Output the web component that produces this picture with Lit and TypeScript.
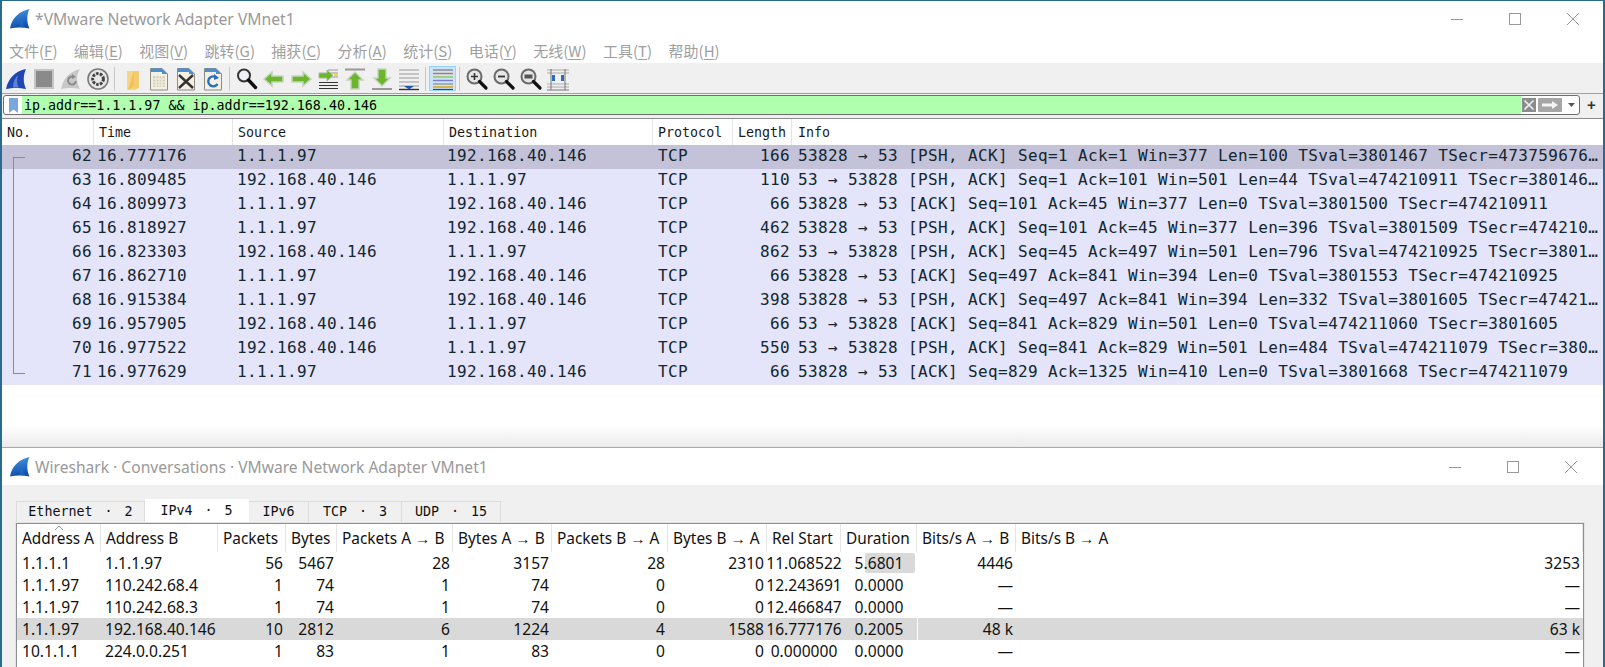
import { LitElement, html, css, svg } from "lit";
import { customElement } from "lit/decorators.js";

const fin = (id: string) => html`<svg class="fin" viewBox="0 0 20 20">
  <defs><linearGradient id=${id} x1="0" y1="0" x2="0.2" y2="1"><stop offset="0" stop-color="#4a9be0"/><stop offset="1" stop-color="#0f4fb0"/></linearGradient></defs>
  <path d="M0 19.5C1.5 10 8 2.5 19.5 0C16.5 6 16.5 13 19.5 19.5C13 18.2 6 18.2 0 19.5Z" fill="url(#${id})"/>
  <path d="M13.5 7C12 11 12.5 15 15 18.2C13.5 18 11.5 17.8 10 17.7C10 13 11 9.5 13.5 7Z" fill="#2a6fc8" opacity=".5"/>
</svg>`;

const winCtl = () => html`<div class="ctl">
  <svg viewBox="0 0 58 14" width="58" height="14"><path d="M23 7.5H35" stroke="#999" fill="none"/></svg>
  <svg viewBox="0 0 58 14" width="58" height="14"><rect x="23.5" y="1.5" width="11" height="11" stroke="#999" fill="none"/></svg>
  <svg viewBox="0 0 58 14" width="58" height="14"><path d="M23 1L35 13M35 1L23 13" stroke="#999" fill="none"/></svg>
</div>`;

const menu: [string, string][] = [["文件", "F"], ["编辑", "E"], ["视图", "V"], ["跳转", "G"], ["捕获", "C"], ["分析", "A"], ["统计", "S"], ["电话", "Y"], ["无线", "W"], ["工具", "T"], ["帮助", "H"]];

const mag = (inner: any) => svg`<circle cx="9.5" cy="9.5" r="7" fill="#e6e6e6" stroke="#6a6a6a" stroke-width="2"/><path d="M14.5 14.5L21 21" stroke="#111" stroke-width="3.2" stroke-linecap="round"/>${inner}`;
const lines = svg`<path d="M2 3H22M2 7H22M2 11H22M2 15H22M2 19H22" stroke="#9a9a9a" stroke-width="1.2"/>`;
const page = (inner: any) => svg`<path d="M3.5 1.5H15L20.5 7V23H3.5Z" fill="#f4f1e4" stroke="#8c8c80"/><path d="M15 1.5L20.5 7H15Z" fill="#4a8fd0"/><path d="M4 1.5H15V5H4Z" fill="#4a8fd0"/>${inner}`;
const grn = "#6cb52e";

const icons: Record<string, any> = {
  start: svg`<path d="M1 22C3 12 10 4 21 2C18 9 18 15 21 22C15 20.5 7 20.5 1 22Z" fill="#2046b4"/><path d="M13 8C11.5 13 12 18 14 20.6C11 20.4 9 20.4 8 20.5C8 15 10 11 13 8Z" fill="#5c84d4"/>`,
  stop: svg`<rect x="3" y="3" width="18" height="18" fill="#8a8a8a" stroke="#c4c4c4" stroke-width="2"/>`,
  restart: svg`<path d="M2 22C4 12 10 5 21 2C17 9 17 15 21 22C15 20.5 8 20.5 2 22Z" fill="#c8c8c8"/><path d="M15 10A4 4 0 1 0 17 14" stroke="#8c8c8c" stroke-width="2" fill="none"/><path d="M13 7L17 10L13 12Z" fill="#8c8c8c"/>`,
  gear: svg`<circle cx="12" cy="12" r="10" fill="#e8e8e8" stroke="#7a7a7a" stroke-width="1.6"/><circle cx="12" cy="12" r="5.4" fill="none" stroke="#444" stroke-width="3" stroke-dasharray="2.6 1.2"/><circle cx="12" cy="12" r="2.6" fill="#e8e8e8"/>`,
  folder: svg`<path d="M7 4H14V7H19V20L14 23H7Z" fill="#f6d684"/><path d="M14 3V20L8 23" fill="#f0c35c"/><path d="M14 4H19V21L14 23Z" fill="#f3cd6e"/>`,
  file: page(svg`<path d="M6 9H18V20H6Z" fill="#d4d0bf"/><path d="M6 12H18M6 15H18M6 18H18M9 9V20M12 9V20M15 9V20" stroke="#f4f1e4"/>`),
  close: page(svg`<path d="M5 8L19 21M19 8L5 21" stroke="#333" stroke-width="2.4"/>`),
  reload: page(svg`<path d="M16 11A5 5 0 1 0 16.5 17" stroke="#2a6cc0" stroke-width="2.4" fill="none"/><path d="M13 7L18 11L13 13Z" fill="#2a6cc0"/>`),
  find: svg`<circle cx="9" cy="8.5" r="6" fill="#eef2f4" stroke="#333" stroke-width="2"/><path d="M13.5 13L20.5 20.5" stroke="#111" stroke-width="3.4" stroke-linecap="round"/>`,
  back: svg`<path d="M2 12L10 5V9H21V15H10V19Z" fill="${grn}" stroke="#c6d4bc" stroke-width="1.6"/>`,
  fwd: svg`<path d="M22 12L14 5V9H3V15H14V19Z" fill="${grn}" stroke="#c6d4bc" stroke-width="1.6"/>`,
  jump: svg`<path d="M3 15.5H22M3 18.5H22M3 21.5H22" stroke="#333" stroke-width="1.2"/><path d="M12 3H22M14 6H22M14 10H22" stroke="#999" stroke-width="1.2"/><path d="M17 8.5L11 3V6H3V11H11V14Z" fill="${grn}" stroke="#aab89c"/><path d="M18 7H22V9H18Z" fill="#f2d94c"/>`,
  top: svg`<path d="M2 2.5H22" stroke="#999" stroke-width="2"/><path d="M12 5L20 13H16V22H8V13H4Z" fill="${grn}" stroke="#c6d4bc" stroke-width="1.4"/>`,
  bottom: svg`<path d="M2 22H22" stroke="#999" stroke-width="2"/><path d="M12 19L20 11H16V2H8V11H4Z" fill="${grn}" stroke="#c6d4bc" stroke-width="1.4"/>`,
  auto: svg`${lines}<path d="M2 22.5H22" stroke="#333" stroke-width="1.4"/><path d="M7 19H17L12 22.5Z" fill="#1f57b0"/>`,
  color: svg`<path d="M2 3H22" stroke="#777" stroke-width="1.2"/><path d="M2 6.5H22" stroke="#e06060" stroke-width="1.4"/><path d="M2 10H22" stroke="#88cc44" stroke-width="1.4"/><path d="M2 13.5H22" stroke="#7b7bd0" stroke-width="1.4"/><path d="M2 17H22" stroke="#888" stroke-width="1.2"/><path d="M2 20H22" stroke="#d8a820" stroke-width="1.6"/><path d="M2 22.5H22" stroke="#444" stroke-width="1.2"/>`,
  zin: mag(svg`<path d="M6 9.5H13M9.5 6V13" stroke="#333" stroke-width="1.6"/>`),
  zout: mag(svg`<path d="M6 9.5H13" stroke="#333" stroke-width="1.8"/>`),
  zreset: mag(svg`<rect x="5.5" y="7.5" width="8" height="4" fill="#555"/>`),
  resize: svg`<path d="M1 3H23M1 6H23M1 17H23M1 20H23" stroke="#aaa"/><path d="M1 23H23" stroke="#777"/><path d="M5 2V23M19 2V23" stroke="#777" stroke-width="1"/><path d="M6 8H9V14H6ZM15 8H18V14H15Z" fill="#2a6cc0"/>`,
};

const tb1 = ["start", "stop", "restart", "gear"];
const tb2 = ["folder", "file", "close", "reload"];
const tb3 = ["find", "back", "fwd", "jump", "top", "bottom", "auto"];
const tb4 = ["zin", "zout", "zreset", "resize"];

const pkts = [
  ["62", "16.777176", "1.1.1.97", "192.168.40.146", "166", "53828 → 53 [PSH, ACK] Seq=1 Ack=1 Win=377 Len=100 TSval=3801467 TSecr=473759676…"],
  ["63", "16.809485", "192.168.40.146", "1.1.1.97", "110", "53 → 53828 [PSH, ACK] Seq=1 Ack=101 Win=501 Len=44 TSval=474210911 TSecr=380146…"],
  ["64", "16.809973", "1.1.1.97", "192.168.40.146", "66", "53828 → 53 [ACK] Seq=101 Ack=45 Win=377 Len=0 TSval=3801500 TSecr=474210911"],
  ["65", "16.818927", "1.1.1.97", "192.168.40.146", "462", "53828 → 53 [PSH, ACK] Seq=101 Ack=45 Win=377 Len=396 TSval=3801509 TSecr=474210…"],
  ["66", "16.823303", "192.168.40.146", "1.1.1.97", "862", "53 → 53828 [PSH, ACK] Seq=45 Ack=497 Win=501 Len=796 TSval=474210925 TSecr=3801…"],
  ["67", "16.862710", "1.1.1.97", "192.168.40.146", "66", "53828 → 53 [ACK] Seq=497 Ack=841 Win=394 Len=0 TSval=3801553 TSecr=474210925"],
  ["68", "16.915384", "1.1.1.97", "192.168.40.146", "398", "53828 → 53 [PSH, ACK] Seq=497 Ack=841 Win=394 Len=332 TSval=3801605 TSecr=47421…"],
  ["69", "16.957905", "192.168.40.146", "1.1.1.97", "66", "53 → 53828 [ACK] Seq=841 Ack=829 Win=501 Len=0 TSval=474211060 TSecr=3801605"],
  ["70", "16.977522", "192.168.40.146", "1.1.1.97", "550", "53 → 53828 [PSH, ACK] Seq=841 Ack=829 Win=501 Len=484 TSval=474211079 TSecr=380…"],
  ["71", "16.977629", "1.1.1.97", "192.168.40.146", "66", "53828 → 53 [ACK] Seq=829 Ack=1325 Win=410 Len=0 TSval=3801668 TSecr=474211079"],
];

const convHead = ["Address A", "Address B", "Packets", "Bytes", "Packets A → B", "Bytes A → B", "Packets B → A", "Bytes B → A", "Rel Start", "Duration", "Bits/s A → B", "Bits/s B → A"];
const conv = [
  ["1.1.1.1", "1.1.1.97", "56", "5467", "28", "3157", "28", "2310", "11.068522", "5.6801", "4446", "3253"],
  ["1.1.1.97", "110.242.68.4", "1", "74", "1", "74", "0", "0", "12.243691", "0.0000", "—", "—"],
  ["1.1.1.97", "110.242.68.3", "1", "74", "1", "74", "0", "0", "12.466847", "0.0000", "—", "—"],
  ["1.1.1.97", "192.168.40.146", "10", "2812", "6", "1224", "4", "1588", "16.777176", "0.2005", "48 k", "63 k"],
  ["10.1.1.1", "224.0.0.251", "1", "83", "1", "83", "0", "0", "0.000000", "0.0000", "—", "—"],
];
const tabs = [["Ethernet", "2", 129], ["IPv4", "5", 104], ["IPv6", "", 60], ["TCP", "3", 93], ["UDP", "15", 99]] as [string, string, number][];

@customElement("app-root")
export class AppRoot extends LitElement {
  static styles = css`
    :host { display: flex; flex-direction: column; width: 1605px; height: 667px; overflow: hidden; background: #2a6a8e; padding: 1px 2px 0 2px; box-sizing: border-box; font-family: "Noto Sans", sans-serif; }
    .w1 { height: 446px; flex: none; background: #fff; display: flex; flex-direction: column; position: relative; }
    .w2 { flex: 1; min-height: 0; background: #f0f0f0; border-top: 1px solid #a8a8a8; display: flex; flex-direction: column; }
    .title { display: flex; align-items: center; background: #fff; color: #999; flex: none; }
    .w1 .title { height: 36px; padding-left: 8px; font-size: 15.7px; }
    .w2 .title { height: 37px; padding-left: 8px; font-size: 15.6px; }
    .fin { width: 20px; height: 20px; flex: none; margin-right: 5px; }
    .tt { flex: 1; white-space: nowrap; }
    .ctl { display: flex; flex: none; }
    .w1 .ctl { padding-right: 1px; margin-top: -1px; }
    .w2 .ctl { padding-right: 3px; }
    .ctl svg { display: block; }
    .menu { height: 26px; flex: none; display: flex; align-items: center; gap: 16.4px; padding-left: 7px; color: #a0a0a0; font-size: 15px; font-family: "Noto Sans CJK SC", "Noto Sans", sans-serif; border-bottom: 1px solid #f0f0f0; white-space: nowrap; }
    .menu u { text-underline-offset: 2px; text-decoration-thickness: 1px; }
    .tool { height: 29px; flex: none; background: #f0f0f0; display: flex; align-items: center; padding-left: 1px; border-bottom: 1px solid #a0a0a0; }
    .ib { width: 27px; height: 24px; display: flex; align-items: center; justify-content: center; flex: none; }
    .ib svg { width: 24px; height: 24px; display: block; }
    .ib.on { background: #cce4f7; outline: 1px solid #99d1ff; outline-offset: -1px; height: 25px; }
    .sep { width: 7px; height: 24px; flex: none; display: flex; justify-content: center; }
    .sep::before { content: ""; width: 1px; background: #c8c8c8; }
    .fb { height: 24px; flex: none; background: #f0f0f0; display: flex; align-items: center; padding: 0 0 2px 1px; box-sizing: border-box; }
    .fi { width: 1577px; height: 20px; box-sizing: border-box; flex: none; display: flex; align-items: stretch; border: 1px solid #6e6e6e; border-radius: 3px; background: #fff; }
    .bm { width: 18px; flex: none; display: flex; align-items: center; justify-content: center; }
    .bm svg { width: 9px; height: 15px; display: block; }
    .ft { width: 1499px; flex: none; background: #afffaf; color: #000; font-family: "DejaVu Sans Mono", monospace; font-size: 13.33px; line-height: 19px; padding-left: 2px; box-sizing: border-box; white-space: pre; }
    .x { display: flex; align-items: center; flex: none; }
    .x svg { display: block; }
    .plus { width: 25px; text-align: center; font: 700 15px/18px "Liberation Sans", sans-serif; color: #333; }
    .pl { flex: 1; min-height: 0; display: flex; flex-direction: column; border-top: 1px solid #8c8c8c; background: linear-gradient(#fff calc(100% - 22px), #ebebeb); }
    .hd, .r { display: grid; grid-template-columns: 92px 139px 211px 209px 80px 59px 1fr; font-family: "DejaVu Sans Mono", monospace; }
    .hd { height: 26px; font-size: 13.33px; line-height: 27px; color: #1a1a1a; background: #fff; }
    .hd span { border-right: 1px solid #e5e5e5; padding-left: 5px; white-space: pre; overflow: hidden; }
    .hd span:last-child { border-right: 0; padding-left: 6px; }
    .r { height: 24px; line-height: 22px; font-size: 16px; letter-spacing: .37px; color: #12272e; background: #e4e4fb; white-space: pre; }
    .r.sel { background: #c4c2d9; }
    .r span { padding-left: 3px; overflow: hidden; }
    .r .no { text-align: right; padding-right: 2px; position: relative; }
    .r .len { text-align: right; padding-right: 2px; }
    .r .sr { padding-left: 4px; }
    .r .pr { padding-left: 5px; }
    .r .inf { padding-left: 6px; overflow: visible; }
    .mk { position: absolute; left: 11px; top: 0; bottom: 0; width: 11px; padding: 0 !important; border-left: 1px solid #8a8a8a; }
    .mk.first { top: 12px; border-top: 1px solid #8a8a8a; }
    .mk.last { bottom: 11px; border-bottom: 1px solid #8a8a8a; }
    .tabs { height: 38px; flex: none; display: flex; align-items: flex-end; padding-left: 14px; }
    .tab { height: 22px; box-sizing: border-box; border: 1px solid #dcdcdc; border-bottom: 0; border-left-width: 0; background: #f0f0f0; font: 13.33px/20px "DejaVu Sans Mono", monospace; color: #111; text-align: center; white-space: pre; }
    .tab:first-child { border-left-width: 1px; }
    .tab.on { background: #fff; height: 24px; border-color: #fff; line-height: 21px; }
    .dot { display: inline-block; width: 16px; text-align: center; }
    .ct { margin-left: 14px; width: 1568px; flex: 1; min-height: 0; box-sizing: border-box; border: 1px solid #8a8f96; border-bottom: 0; outline: 1px solid #e4e4e4; background: #fff; overflow: hidden; color: #111; }
    .ch, .cr { display: grid; grid-template-columns: 84px 117px 68px 51px 116px 99px 116px 99px 74px 76px 99px 1fr; white-space: nowrap; }
    .ch { height: 28px; line-height: 29px; position: relative; font-size: 15.4px; }
    .ch span { border-right: 1px solid #e5e5e5; padding-left: 5px; overflow: hidden; }
    .ch span:last-child { border-right: 0; }
    .caret { position: absolute; left: 37px; top: 1px; }
    .cr { height: 22px; line-height: 22px; font-size: 15.6px; }
    .cr.sel { background: #d9d9d9; }
    .cr span { padding: 0 3px 0 0; }
    .cr .l { padding-left: 5px; }
    .cr .lb { padding-left: 4px; }
    .cr .rt { text-align: right; }
    .cr .c { text-align: center; padding: 0; margin-left: -2px; margin-right: -2px; position: relative; overflow: visible; }
    .cr .d { text-align: center; padding: 0; position: relative; z-index: 0; }
    .cr .b { border-left: 1px solid #fff0; }
    .cr.sel .b { border-left-color: #fff; }
    .cr .d.hl::after { content: ""; position: absolute; z-index: -1; left: 24px; right: 2px; top: 1px; bottom: 1px; background: #d9d9d9; border-radius: 2px; }
  `;

  private ib(n: string, on = false) {
    return html`<div class="ib ${on ? "on" : ""}"><svg viewBox="0 0 24 24">${icons[n]}</svg></div>`;
  }

  render() {
    return html`
      <div class="w1">
        <div class="title">${fin("fa")}<div class="tt">*VMware Network Adapter VMnet1</div>${winCtl()}</div>
        <div class="menu">${menu.map(([a, b]) => html`<span>${a}(<u>${b}</u>)</span>`)}</div>
        <div class="tool">
          ${tb1.map((n) => this.ib(n))}<div class="sep"></div>
          ${tb2.map((n) => this.ib(n))}<div class="sep"></div>
          ${tb3.map((n) => this.ib(n))}<div class="sep"></div>
          ${this.ib("color", true)}<div class="sep"></div>
          ${tb4.map((n) => this.ib(n))}
        </div>
        <div class="fb">
          <div class="fi">
            <div class="bm"><svg viewBox="0 0 9 15"><path d="M0 0H9V15L4.5 11.5L0 15Z" fill="#7ba8dc"/></svg></div>
            <div class="ft">ip.addr==1.1.1.97 &amp;&amp; ip.addr==192.168.40.146</div>
            <div class="x">
              <svg width="17" height="18" viewBox="0 0 17 18"><rect x="1" y="2" width="14" height="14" fill="#8c8c8c"/><path d="M3.5 4.5L12.5 13.5M12.5 4.5L3.5 13.5" stroke="#eee" stroke-width="1.6"/></svg>
              <svg width="24" height="18" viewBox="0 0 24 18"><rect x="0" y="2" width="24" height="14" rx="1" fill="#a6a6a6"/><path d="M4 7.5H14V5L20 9L14 13V10.5H4Z" fill="#f4f4f4"/></svg>
              <svg width="16" height="18" viewBox="0 0 16 18"><path d="M6 7H13L9.5 11Z" fill="#555"/></svg>
            </div>
          </div>
          <div class="plus">+</div>
        </div>
        <div class="pl">
          <div class="hd"><span>No.</span><span>Time</span><span>Source</span><span>Destination</span><span>Protocol</span><span>Length</span><span>Info</span></div>
          ${pkts.map((p, i) => html`<div class="r ${i === 0 ? "sel" : ""}">
            <span class="no"><span class="mk ${i === 0 ? "first" : i === 9 ? "last" : ""}"></span>${p[0]}</span>
            <span class="tm">${p[1]}</span><span class="sr">${p[2]}</span><span class="ds">${p[3]}</span><span class="pr">TCP</span><span class="len">${p[4]}</span><span class="inf">${p[5]}</span>
          </div>`)}
        </div>
      </div>
      <div class="w2">
        <div class="title">${fin("fb")}<div class="tt">Wireshark · Conversations · VMware Network Adapter VMnet1</div>${winCtl()}</div>
        <div class="tabs">${tabs.map(([t, n, w], i) => html`<div class="tab ${i === 1 ? "on" : ""}" style="width:${w}px">${t}${n ? html` <span class="dot">·</span> ${n}` : ""}</div>`)}</div>
        <div class="ct">
          <div class="ch">
            ${convHead.map((h) => html`<span>${h}</span>`)}
            <svg class="caret" width="10" height="6" viewBox="0 0 10 6"><path d="M1 5L5 1L9 5" stroke="#999" fill="none"/></svg>
          </div>
          ${conv.map((c, i) => html`<div class="cr ${i === 3 ? "sel" : ""}">
            ${c.map((v, j) => j === 0 ? html`<span class="l">${v}</span>`
              : j === 1 ? html`<span class="lb">${v}</span>`
              : j === 8 ? html`<span class="c">${v}</span>`
              : j === 9 ? html`<span class="d ${i === 0 ? "hl" : ""}">${v}</span>`
              : j === 10 ? html`<span class="rt b">${v}</span>`
              : html`<span class="rt">${v}</span>`)}
          </div>`)}
        </div>
      </div>
    `;
  }
}
